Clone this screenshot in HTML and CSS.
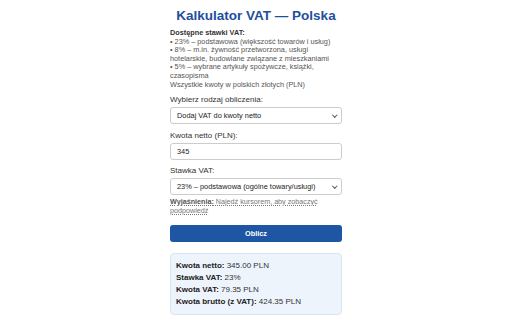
FILE: index.html
```html
<!DOCTYPE html>
<html lang="pl">

<head>
    <meta charset="utf-8">
    <title>Kalkulator VAT — Polska</title>
    <link rel="stylesheet" href="styles.css">
</head>

<body>
    <div class="calc">
        <h1 class="title">Kalkulator VAT — Polska</h1>

        <div class="rates">
            <strong>Dostępne stawki VAT:</strong><br>
            • 23% – podstawowa (większość towarów i usług)<br>
            • 8% – m.in. żywność przetworzona, usługi hotelarskie, budowlane związane z mieszkaniami<br>
            • 5% – wybrane artykuły spożywcze, książki, czasopisma<br>
            Wszystkie kwoty w polskich złotych (PLN)
        </div>

        <form class="calc-form" onsubmit="return false">
            <div class="field">
                <label for="mode">Wybierz rodzaj obliczenia:</label>
                <div class="select-wrap">
                    <select id="mode" name="mode">
                        <option value="add">Dodaj VAT do kwoty netto</option>
                        <option value="remove">Odejmij VAT od kwoty brutto</option>
                    </select>
                </div>
            </div>
            <div class="field">
                <label for="amount">Kwota netto (PLN):</label>
                <input type="text" id="amount" name="amount" value="345">
            </div>
            <div class="field field-last">
                <label for="rate">Stawka VAT:</label>
                <div class="select-wrap">
                    <select id="rate" name="rate">
                        <option value="23">23% – podstawowa (ogólne towary/usługi)</option>
                        <option value="8">8% – obniżona</option>
                        <option value="5">5% – obniżona</option>
                    </select>
                </div>
            </div>
            <div class="hint">
                <span class="hint-text" title="Wybierz stawkę i wpisz kwotę"><b>Wyjaśnienia:</b> Najedź kursorem, aby zobaczyć podpowiedź</span>
            </div>
            <button type="submit" class="calc-btn">Oblicz</button>
        </form>

        <div class="result">
            <div><b>Kwota netto:</b> 345.00 PLN</div>
            <div><b>Stawka VAT:</b> 23%</div>
            <div><b>Kwota VAT:</b> 79.35 PLN</div>
            <div><b>Kwota brutto (z VAT):</b> 424.35 PLN</div>
        </div>
    </div>
</body>

</html>
```

FILE: styles.css
```css
body {
    margin: 0;
    font-family: "Liberation Sans", Arial, sans-serif;
    background: #ffffff;
    color: #333333;
}

.calc {
    width: 172px;
    margin: 0 auto;
    padding-top: 8px;
}

.title {
    margin: 0 -20px 5px;
    font-size: 13.5px;
    line-height: 16px;
    text-align: center;
    white-space: nowrap;
    color: #1d4f9c;
}

.rates {
    margin-bottom: 6px;
    font-size: 7.3px;
    line-height: 8.6px;
    color: #555555;
}

.rates strong {
    color: #333333;
}

.field {
    margin-bottom: 6.5px;
}

.field-last {
    margin-bottom: 1.5px;
}

.field label {
    display: block;
    margin-bottom: 3px;
    font-size: 8px;
    line-height: 9px;
    color: #333333;
}

.select-wrap {
    position: relative;
}

.select-wrap::after {
    content: "";
    position: absolute;
    right: 6px;
    top: 6px;
    width: 2.5px;
    height: 2.5px;
    border-right: 1px solid #555555;
    border-bottom: 1px solid #555555;
    transform: rotate(45deg);
    pointer-events: none;
}

.field select,
.field input {
    display: block;
    width: 100%;
    height: 17px;
    box-sizing: border-box;
    margin: 0;
    padding: 0 4px;
    border: 1px solid #cccccc;
    border-radius: 3px;
    background: #ffffff;
    font-family: inherit;
    font-size: 7.4px;
    color: #222222;
}

.field select {
    appearance: none;
    -webkit-appearance: none;
    padding: 0 14px 0 6px;
}

.field input {
    padding: 0 6px;
}

.hint {
    font-size: 7.2px;
    line-height: 9px;
    color: #777777;
}

.hint-text {
    text-decoration: underline dotted;
    cursor: help;
}

.hint-text b {
    color: #555555;
}

.calc-btn {
    display: block;
    width: 100%;
    height: 17px;
    margin-top: 10px;
    border: none;
    border-radius: 3px;
    background-color: #1f56a3;
    color: #ffffff;
    font-family: inherit;
    font-size: 7.3px;
    font-weight: bold;
    cursor: pointer;
}

.calc-btn:hover {
    background-color: #184a8f;
}

.result {
    margin-top: 11.5px;
    padding: 6px 5px;
    border: 1px solid #dae5f3;
    border-radius: 4px;
    background: #eef4fc;
    font-size: 8px;
    line-height: 12px;
    color: #333333;
}

.result b {
    color: #222222;
}
```
